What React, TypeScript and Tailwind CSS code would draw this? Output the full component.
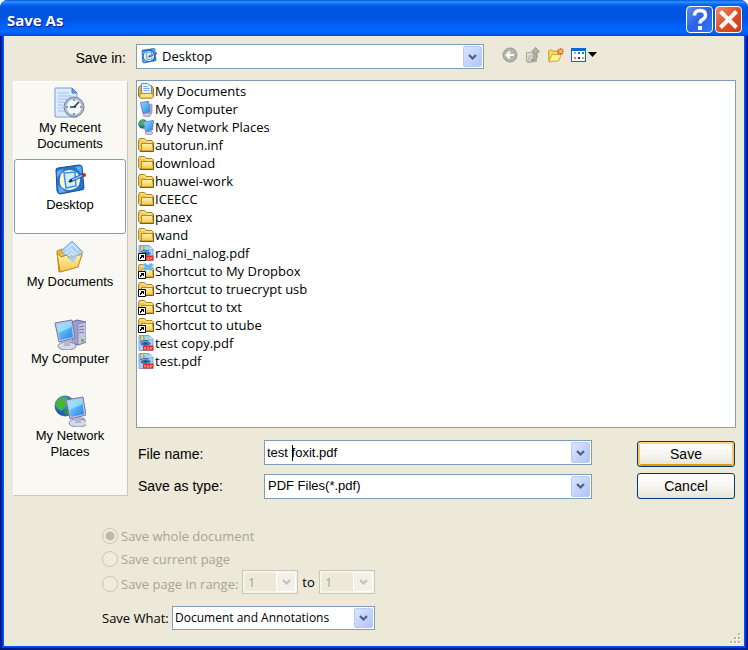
import { useId, type ReactNode } from "react";

const UI = "font-['Open_Sans','Noto_Sans',sans-serif]";
const SANS = "font-['Liberation_Sans',Arial,sans-serif]";

function MonitorShape() {
  return (
    <>
      <path d="M14 24l5-3 5 1v4H14z" fill="#a9abc9" />
      <ellipse cx="17" cy="27" rx="9" ry="4" fill="#d9d9e8" stroke="#8385a8" />
      <path d="M14 20h6v7h-6z" fill="#b5b6d2" />
      <path d="M5 4l17-3 3 18-16 4z" fill="#c3c6df" stroke="#7377a6" />
      <path d="M7 6l14-3 2 15-13 3z" fill="url(#screen)" />
      <path d="M7 6l14-3 .6 5L8.500 14z" fill="#b8f0ff" opacity=".6" />
    </>
  );
}

function GlobeShape() {
  return (
    <>
      <circle cx="11" cy="11" r="10" fill="url(#globe)" stroke="#1d4f9e" strokeWidth=".7" />
      <path d="M3 6l5-4 4 1-1 4 3 2-4 3-2 4-4-2-3-4z" fill="#45b633" />
      <path d="M13 2l5 3 2 4-4-1-3-3zM11 14l4-1 2 3-4 4-3-2z" fill="#2f9a28" />
    </>
  );
}

function RecentIcon() {
  return (
    <svg viewBox="0 0 32 32" className="size-8" aria-hidden="true">
      <path d="M1 1h17l5 5v24H1z" fill="#dcebff" stroke="#7f9fd6" />
      <path d="M18 1v5h5z" fill="#5aa0ee" stroke="#487fc4" />
      <path d="M4 6h11M4 9h13M4 12h9M4 15h6M4 18h5M4 21h5M4 24h6" stroke="#9dbdee" />
      <circle cx="20" cy="20" r="10" fill="#a9bdd0" stroke="#6d849c" />
      <circle cx="20" cy="20" r="7.500" fill="#f1faff" />
      <path d="M20 20l5-5M16 20h6" stroke="#20374c" strokeWidth="1.500" />
      <path d="M20 12v2M20 26v2M12 20h2M26 20h2" stroke="#e2602c" strokeWidth="1.500" />
    </svg>
  );
}

function DesktopIcon({ className }: { className: string }) {
  return (
    <svg viewBox="0 0 32 32" className={className} aria-hidden="true">
      <path d="M2 6q0-2 2-2L25 1q3 0 3 2l2 21q0 2-3 2L6 30q-2 0-3-3z" fill="#2373d1" stroke="#164d9b" />
      <path d="M3 7l7-2-7 9zM21 3l6-1 1 8zM4 21l8 7-7 1z" fill="#62aaf3" />
      <path d="M7 10q6-6 13-3 7 3 6 10-1 8-10 9-8 0-10-6-1-5 1-10z" fill="#fff4c4" />
      <path d="M10 9l11-1 1 14-10 2z" fill="#d3ecff" stroke="#3c91dd" strokeWidth="1.500" />
      <path d="M16 17l13-6" stroke="#1c5bab" strokeWidth="3.500" />
      <path d="M18 16l10-4.500" stroke="#80c5ff" strokeWidth="1.500" />
      <path d="M15 18l3-2" stroke="#222" strokeWidth="2" />
      <circle cx="30" cy="11" r="2" fill="#c62b16" />
    </svg>
  );
}

function DocumentsIcon() {
  return (
    <svg viewBox="0 0 32 32" className="size-8" aria-hidden="true">
      <path d="M3 10l5-2 4 2 12 1 4 3-5 12-18 5z" fill="#efb934" stroke="#b9841e" />
      <path d="M7 10L18 0l11 11-8 12z" fill="#a9d3fa" stroke="#78a7db" />
      <path d="M12 9l6-6 6 6M11 13l6-5 6 6M12 16l6-4 4 5" stroke="#e9f6ff" fill="none" />
      <path d="M3 12l4 4 6-2 2 3 13-4-4 13-18 5z" fill="url(#folder)" stroke="#bd8a20" />
      <path d="M14 17l10-3-5 8z" fill="#a6cdf2" />
    </svg>
  );
}

function ComputerIcon() {
  return (
    <svg viewBox="0 0 32 32" className="size-8" aria-hidden="true">
      <path d="M18 4l5-2 9 2v20l-8 3-6-2z" fill="#9d9fc9" stroke="#6668a0" />
      <path d="M24 6l8-2v20l-8 3z" fill="#c3c5e2" stroke="#7779aa" strokeWidth=".7" />
      <path d="M25 9l5-1M25 12l5-1M25 15l5-1" stroke="#7476a6" />
      <path d="M27 21h3v3h-3z" fill="#78b44d" />
      <g transform="translate(-4 1)"><MonitorShape /></g>
    </svg>
  );
}

function NetworkIcon() {
  return (
    <svg viewBox="0 0 32 32" className="size-8" aria-hidden="true">
      <GlobeShape />
      <g transform="translate(7 1)"><MonitorShape /></g>
    </svg>
  );
}

const folderBody = (
  <>
    <path d="M.5 3.500l1-2h5l1.500 2h6l1 1v9h-13.500l-1-1z" fill="#f3c74f" stroke="#b5861d" />
    <path d="M2.500 3h4l1.500 2h6" fill="none" stroke="#fff2ae" />
    <path d="M3.500 6.500h11l1 7.500h-12z" fill="url(#folder)" stroke="#b98a20" />
    <path d="M2 14.500h13.500V6" fill="none" stroke="#7f5c12" />
  </>
);

const pdfBody = (
  <>
    <path d="M1 .5h10l4 4v11H1z" fill="#a9d1f5" stroke="#78a7dd" />
    <path d="M11 .5v4h4z" fill="#e9f5ff" stroke="#78a7dd" strokeWidth=".7" />
    <path d="M2 1h1.500v5H2z" fill="#e47ac2" />
    <path d="M3.500 1H5v5H3.500z" fill="#f6e04a" />
    <path d="M5 1h1.500v5H5z" fill="#61cf62" />
    <path d="M2 9q4-5 11-1-1 3-6 3-3 0-5-2z" fill="#3475b9" />
    <path d="M2 7q4-3 9-1" stroke="#2c609f" fill="none" />
    <circle cx="7.500" cy="8.500" r="1" fill="#14325e" />
    <path d="M5 10.500h10.500v5H5z" fill="#e92a2a" />
    <path d="M6.500 14.500v-2h1.500v1H6.500M9.500 12.500h1.500v2H9.500zM12.500 15v-2.500h2M12.500 13.500h1.500" stroke="#ffb0a8" strokeWidth=".6" fill="none" />
  </>
);

const arrowBadge = (
  <>
    <path d="M.5 8.500h7v7h-7z" fill="#fff" stroke="#000" />
    <path d="M3 10h3v3H5v-1H4v1H3v1H2v-2h1v-1z" fill="#000" />
  </>
);

type Kind = "docs" | "computer" | "network" | "folder" | "pdf" | "pdfLink" | "boxLink" | "folderLink";

function FileIcon({ kind }: { kind: Kind }) {
  return (
    <svg viewBox="0 0 16 16" className="size-4 shrink-0" aria-hidden="true">
      {kind === "docs" && (
        <>
          <path d="M.5 4.500l2-2h11l2 3v8l-2 1.500h-11l-2-2z" fill="#e5ae38" stroke="#a8761b" />
          <path d="M3.500.5h6l4 3v8h-10z" fill="#e5f1ff" stroke="#608fd0" />
          <path d="M5.500 3.500h4M5.500 5.500h6M5.500 7.500h6" stroke="#81aee4" />
          <path d="M2 10.500h13v3l-1 1.500H2z" fill="#ffe38a" stroke="#c48e27" />
        </>
      )}
      {kind === "computer" && (
        <>
          <path d="M10 4l4-1v9l-4 2z" fill="#aeb0d5" stroke="#7477a8" strokeWidth=".6" />
          <ellipse cx="9" cy="13.700" rx="4" ry="2" fill="#c9c9df" stroke="#8082a9" strokeWidth=".6" />
          <path d="M2.500 1.500l8-1 1.500 10-7 2z" fill="url(#screen)" stroke="#6a7fc0" />
        </>
      )}
      {kind === "network" && (
        <>
          <g transform="scale(.45)"><GlobeShape /></g>
          <ellipse cx="11" cy="14" rx="4" ry="1.700" fill="#c9c9df" stroke="#8082a9" strokeWidth=".6" />
          <path d="M5.500 3l10-1.500-1 9.500-7 1.500z" fill="url(#screen)" stroke="#7d88bd" />
        </>
      )}
      {(kind === "folder" || kind === "folderLink" || kind === "boxLink") && folderBody}
      {(kind === "pdf" || kind === "pdfLink") && pdfBody}
      {kind === "boxLink" && (
        <path d="M4 2l3-2 3 2 3-2 3 2-3 2 3 2-3 2-3-2-3 2-3-2 3-2z" fill="#68b7ed" stroke="#a9dcff" strokeWidth=".5" />
      )}
      {(kind === "pdfLink" || kind === "folderLink" || kind === "boxLink") && arrowBadge}
    </svg>
  );
}

function Chevron({ disabled = false }: { disabled?: boolean }) {
  return (
    <svg viewBox="0 0 9 6" className="h-[6px] w-[9px]" aria-hidden="true">
      <path d="M1 1l3.500 3.500L8 1" fill="none" stroke={disabled ? "#c5c3b5" : "#4d6185"} strokeWidth="2.200" />
    </svg>
  );
}

const ARROW =
  "flex w-[19px] items-center justify-center rounded-[2px] border border-[#b9cbf5] bg-linear-to-br from-[#dbe5fe] to-[#afc5f8]";

interface PickerProps {
  options: string[];
  className: string;
  textClass?: string;
  id?: string;
  label?: string;
  disabled?: boolean;
}

function Picker({ options, className, textClass = "", id, label, disabled = false }: PickerProps) {
  return (
    <div className={`relative border ${disabled ? "border-[#c9c7ba] bg-[#ece9d8]" : "border-[#7f9db9] bg-white"} ${className}`}>
      <select
        id={id}
        aria-label={label}
        disabled={disabled}
        className={`block size-full appearance-none bg-transparent pr-6 opacity-100 outline-none ${disabled ? "border-2 border-[#f5f4ea] text-[#a7a593]" : "text-black"} ${textClass}`}
      >
        {options.map((option) => (
          <option key={option}>{option}</option>
        ))}
      </select>
      <span
        className={`pointer-events-none absolute inset-y-px right-px ${disabled ? "flex w-[20px] items-center justify-center rounded-[2px] border border-white bg-[#f2f0e7]" : ARROW}`}
      >
        <Chevron disabled={disabled} />
      </span>
    </div>
  );
}

const places: { name: string; icon: ReactNode }[] = [
  { name: "My Recent Documents", icon: <RecentIcon /> },
  { name: "Desktop", icon: <DesktopIcon className="size-8" /> },
  { name: "My Documents", icon: <DocumentsIcon /> },
  { name: "My Computer", icon: <ComputerIcon /> },
  { name: "My Network Places", icon: <NetworkIcon /> },
];

const files: { name: string; kind: Kind }[] = [
  { name: "My Documents", kind: "docs" },
  { name: "My Computer", kind: "computer" },
  { name: "My Network Places", kind: "network" },
  { name: "autorun.inf", kind: "folder" },
  { name: "download", kind: "folder" },
  { name: "huawei-work", kind: "folder" },
  { name: "ICEECC", kind: "folder" },
  { name: "panex", kind: "folder" },
  { name: "wand", kind: "folder" },
  { name: "radni_nalog.pdf", kind: "pdfLink" },
  { name: "Shortcut to My Dropbox", kind: "boxLink" },
  { name: "Shortcut to truecrypt usb", kind: "folderLink" },
  { name: "Shortcut to txt", kind: "folderLink" },
  { name: "Shortcut to utube", kind: "folderLink" },
  { name: "test copy.pdf", kind: "pdf" },
  { name: "test.pdf", kind: "pdf" },
];

function TitleBar() {
  return (
    <header className="relative z-10 flex h-9 items-center rounded-t-lg bg-[linear-gradient(to_bottom,#0058e6_0%,#3a93ff_6%,#0a6cf5_11%,#0056e3_20%,#0054e0_50%,#0061fa_72%,#0066ff_88%,#0058ee_95%,#0048d0_100%)] pr-[6px] pl-[7px]">
      <h1 className={`flex-1 pt-1 text-[15px] font-bold text-white [text-shadow:1px_1px_1px_#0a1883] ${UI}`}>Save As</h1>
      <div className="flex gap-[2px] pt-[3px]">
        <button type="button" aria-label="Help" className="size-[27px] overflow-hidden rounded-[4px] border border-white bg-linear-to-br from-[#5c8df5] via-[#2c62e6] to-[#2f78fb]">
          <svg viewBox="0 0 25 25" className="size-full" aria-hidden="true">
            <path d="M7.500 8.500q0-5 5.500-5t5.500 4.500q0 3-3 4.500-2.500 1.500-2.500 4" fill="none" stroke="#fff" strokeWidth="3.400" />
            <path d="M11 19h4v4h-4z" fill="#fff" />
          </svg>
        </button>
        <button type="button" aria-label="Close" className="size-[27px] overflow-hidden rounded-[4px] border border-white bg-linear-to-br from-[#ee8a6b] via-[#df4f28] to-[#cc3c12]">
          <svg viewBox="0 0 25 25" className="size-full" aria-hidden="true">
            <path d="M4.500 4.500l16 16M20.500 4.500l-16 16" stroke="#fff" strokeWidth="4" />
          </svg>
        </button>
      </div>
    </header>
  );
}

function Toolbar() {
  return (
    <div className="flex items-center gap-[7px] pb-[3px]">
      <button type="button" aria-label="Back" className="size-4">
        <svg viewBox="0 0 16 16" aria-hidden="true">
          <circle cx="8" cy="8" r="7" fill="#b5b4ab" stroke="#989890" />
          <path d="M12 8H5M8 4.500L4.500 8 8 11.500" fill="none" stroke="#fff" strokeWidth="2" />
        </svg>
      </button>
      <button type="button" aria-label="Up one level" className="size-4">
        <svg viewBox="0 0 16 16" aria-hidden="true">
          <path d="M1.500 5.500h4l1 1h5v8l-9 1-1-1z" fill="#dddcd0" stroke="#aaa99d" />
          <path d="M2.500 15l2-6h8l-2 5z" fill="#d8d7cd" stroke="#b3b2a7" />
          <path d="M6 13q4-1 3-8H6.500L10.500.500l4 4.500H12q1 7-4 9z" fill="#b4b3aa" stroke="#858580" strokeWidth=".8" />
        </svg>
      </button>
      <button type="button" aria-label="Create new folder" className="size-4">
        <svg viewBox="0 0 16 16" aria-hidden="true">
          <path d="M.5 4l2-1.500 2.500 1.500h5v9l-9 2z" fill="#f8d765" stroke="#c89a2d" />
          <path d="M1 14.500l3-7h9.500l-3 6.500z" fill="#fff09c" stroke="#d6a93a" />
          <path d="M12.500 1v7M9 4.500h7M10 2l5 5M15 2l-5 5" stroke="#f05a1c" strokeWidth="1.200" />
          <circle cx="12.500" cy="4.500" r="1.400" fill="#ffd93c" />
        </svg>
      </button>
      <button type="button" aria-label="View menu" className="flex items-center">
        <svg viewBox="0 0 27 14" className="h-[14px] w-[27px]" aria-hidden="true">
          <path d="M0 0h15v14H0z" fill="#1166cf" />
          <path d="M1 3h13v10H1z" fill="#fff" />
          <path d="M3 4h2v2H3z" fill="#a7a4c8" />
          <path d="M7 4h2v2H7z" fill="#2878d8" />
          <path d="M11 4h2v2h-2z" fill="#159528" />
          <path d="M3 9h2v2H3z" fill="#f08062" />
          <path d="M7 9h2v2H7z" fill="#122ca0" />
          <path d="M11 9h2v2h-2z" fill="#c8a624" />
          <path d="M17 4h9l-4.500 5z" fill="#000" />
        </svg>
      </button>
    </div>
  );
}

function RadioOption({ label, checked = false }: { label: string; checked?: boolean }) {
  return (
    <label className="flex items-center gap-[3px] text-[#a7a593]">
      <input
        type="radio"
        name="scope"
        disabled
        defaultChecked={checked}
        className="size-4 appearance-none rounded-full border border-[#c9c7ba] bg-[#efecdf] bg-clip-padding checked:bg-[radial-gradient(circle,#bbb9ac_0_4px,#efecdf_5px)]"
      />
      {label}
    </label>
  );
}

const BUTTON = "h-[26px] rounded-[3px] border border-[#003c74] bg-linear-to-b from-white via-[#f6f5f0] to-[#e6e3d8] text-[14px]";

export default function App() {
  const id = useId();
  return (
    <div className="bg-[#f4f8fb]">
      <svg className="absolute size-0" aria-hidden="true">
        <defs>
          <linearGradient id="screen" x1="0" y1="0" x2="1" y2="1">
            <stop offset="0" stopColor="#8be0ff" />
            <stop offset="1" stopColor="#1f83e6" />
          </linearGradient>
          <linearGradient id="folder" x1="0" y1="0" x2="0" y2="1">
            <stop offset="0" stopColor="#fff3b0" />
            <stop offset="1" stopColor="#f5c64a" />
          </linearGradient>
          <radialGradient id="globe" cx=".4" cy=".3">
            <stop offset="0" stopColor="#84c8ff" />
            <stop offset="1" stopColor="#1660c4" />
          </radialGradient>
        </defs>
      </svg>
      <div className="flex min-h-screen flex-col rounded-t-lg bg-[#0046e5]">
        <TitleBar />
        <main className={`relative mx-1 mb-1 flex flex-1 flex-col bg-[#ece9d8] pt-2 pr-2 pl-[9px] text-[14px] text-black shadow-[0_0_0_1px_#0054f0,0_0_0_2px_#0040e0,0_0_0_4px_#001a90] ${SANS}`}>
          <div className="flex items-center gap-2">
            <label htmlFor={`${id}-in`} className="w-[115px] pt-1 pr-[2px] text-right">Save in:</label>
            <div className="relative w-[348px]">
              <Picker id={`${id}-in`} options={["Desktop"]} className="h-[25px]" textClass={`pl-[25px] text-[13px] ${UI}`} />
              <DesktopIcon className="pointer-events-none absolute top-1 left-[5px] size-4" />
            </div>
            <div className="pl-[10px]"><Toolbar /></div>
          </div>

          <div className="mt-[11px] flex flex-1 gap-2">
            <nav aria-label="Places" className="mt-px mb-[3px] flex w-[115px] shrink-0 flex-col gap-[2px] border border-t-white border-r-[#c9c7ba] border-b-[#c9c7ba] border-l-white bg-[#f9f8f3]">
              {places.map((place) => (
                <button
                  key={place.name}
                  type="button"
                  className={`flex h-[75px] w-[112px] flex-col items-center gap-px rounded-[3px] border px-3 pt-1 text-[13px] leading-4 ${place.name === "Desktop" ? "border-[#7f9db9] bg-white" : "border-transparent"}`}
                >
                  {place.icon}
                  <span className={place.name.length > 12 ? "w-[80px]" : "whitespace-nowrap"}>{place.name}</span>
                </button>
              ))}
            </nav>
            <div className="flex min-w-0 flex-1 flex-col">
              <ul className={`flex-1 border border-[#7f9db9] bg-white pt-px pl-px text-[13px] ${UI}`}>
                {files.map((file) => (
                  <li key={file.name} className="flex h-[18px] items-center gap-px leading-[18px]">
                    <FileIcon kind={file.kind} />
                    {file.name}
                  </li>
                ))}
              </ul>
              <div className="mt-3 flex justify-between pr-px pl-[2px]">
                <div className="grid grid-cols-[126px_328px] gap-y-2">
                  <label htmlFor={`${id}-name`} className="self-center pt-1">File name:</label>
                  <div className="relative flex h-[25px] border border-[#7f9db9] bg-white p-px">
                    <input id={`${id}-name`} type="text" defaultValue="test foxit.pdf" className="min-w-0 flex-1 pl-px text-[13px] outline-none" />
                    <span className="absolute top-[4px] left-[27px] h-4 w-px bg-black" />
                    <button type="button" aria-label="Show recent names" className={ARROW}><Chevron /></button>
                  </div>
                  <label htmlFor={`${id}-type`} className="self-center pt-px">Save as type:</label>
                  <Picker id={`${id}-type`} options={["PDF Files(*.pdf)"]} className="h-[25px]" textClass="pl-[3px] text-[13px]" />
                </div>
                <div className="flex w-[98px] flex-col gap-[6px] pt-px">
                  <button type="button" className={`${BUTTON} shadow-[inset_0_2px_0_#fcd68a,inset_2px_0_0_#fbc761,inset_-2px_0_0_#fbc761,inset_0_-2px_0_#e59700]`}>Save</button>
                  <button type="button" className={BUTTON}>Cancel</button>
                </div>
              </div>
            </div>
          </div>

          <div className={`mt-[25px] flex flex-col items-start pb-4 pl-[89px] text-[13px] leading-[18px] ${UI}`}>
            <fieldset aria-label="Pages to save" className="flex flex-col">
              <div className="flex h-6 items-center"><RadioOption label="Save whole document" checked /></div>
              <div className="flex h-[22px] items-center"><RadioOption label="Save current page" /></div>
              <div className="flex h-6 items-center">
                <div className="w-[140px] pt-1 whitespace-nowrap"><RadioOption label="Save page in range:" /></div>
                <Picker label="First page" options={["1"]} className="h-6 w-14" textClass="pl-[3px]" disabled />
                <span className="w-[21px] text-center">to</span>
                <Picker label="Last page" options={["1"]} className="h-6 w-14" textClass="pl-[3px]" disabled />
              </div>
            </fieldset>
            <div className="mt-3 flex items-center">
              <label htmlFor={`${id}-what`} className="w-[70px] whitespace-nowrap">Save What:</label>
              <Picker id={`${id}-what`} options={["Document and Annotations"]} className="h-6 w-[203px]" textClass="pl-[2px] text-[12px]" />
            </div>
          </div>

          <svg viewBox="0 0 11 11" className="absolute right-[3px] bottom-[2px] size-[11px]" aria-hidden="true">
            <path d="M9 1h2v2H9zM5 5h2v2H5zM9 5h2v2H9zM1 9h2v2H1zM5 9h2v2H5zM9 9h2v2H9z" fill="#fff" />
            <path d="M8 0h2v2H8zM4 4h2v2H4zM8 4h2v2H8zM0 8h2v2H0zM4 8h2v2H4zM8 8h2v2H8z" fill="#b8b4a3" />
          </svg>
        </main>
      </div>
    </div>
  );
}
